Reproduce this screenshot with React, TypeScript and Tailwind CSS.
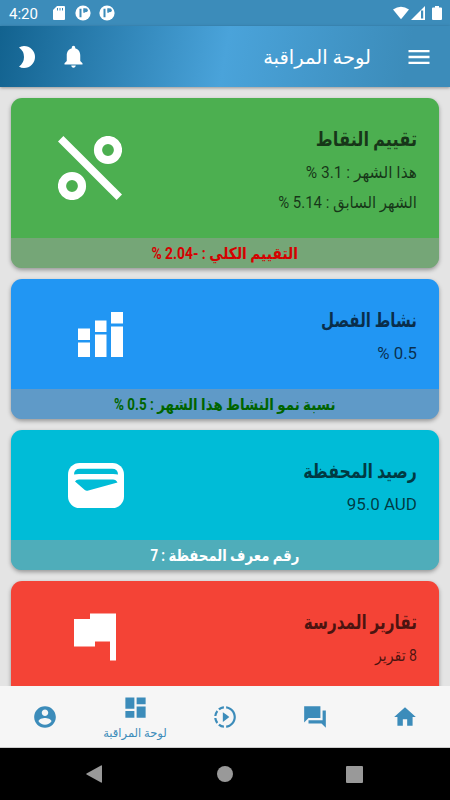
import type { ReactNode } from 'react'
import { MdSlowMotionVideo } from 'react-icons/md'

function Icon({ d, className }: { d: string; className?: string }) {
  return (
    <svg viewBox="0 0 24 24" fill="currentColor" className={className}>
      <path d={d} />
    </svg>
  )
}

const paths = {
  bell: 'M12 22c1.1 0 2-.9 2-2h-4c0 1.1.89 2 2 2zm6-6v-5c0-3.07-1.64-5.64-4.5-6.32V4c0-.83-.67-1.5-1.5-1.5s-1.5.67-1.5 1.5v.68C7.63 5.36 6 7.92 6 11v5l-2 2v1h16v-1l-2-2z',
  menu: 'M3 18h18v-2H3v2zm0-5h18v-2H3v2zm0-7v2h18V6H3z',
  account:
    'M12 2C6.48 2 2 6.48 2 12s4.48 10 10 10 10-4.48 10-10S17.52 2 12 2zm0 3c1.66 0 3 1.34 3 3s-1.34 3-3 3-3-1.34-3-3 1.34-3 3-3zm0 14.2c-2.5 0-4.71-1.28-6-3.22.03-1.99 4-3.08 6-3.08 1.99 0 5.97 1.09 6 3.08-1.29 1.94-3.5 3.22-6 3.22z',
  dashboard: 'M3 13h8V3H3v10zm0 8h8v-6H3v6zm10 0h8V11h-8v10zm0-18v6h8V3h-8z',
  chat: 'M21 6h-2v9H6v3h12l4 4V6zm-4 7V2H2v15l4-4h11z',
  home: 'M10 20v-6h4v6h5v-8h3L12 3 2 12h3v8z',
}

function AppBadge() {
  return (
    <svg viewBox="0 0 16 16" className="size-4">
      <circle cx="8" cy="8" r="7.6" fill="#fff" />
      <path d="M4.5 3.7h2v8.6h-2z M8.3 3.2h1.6v4.5H8.3z" fill="#3c8cba" />
      <circle cx="10.8" cy="5.3" r="2" fill="#3c8cba" />
    </svg>
  )
}

function StatusBar() {
  return (
    <div dir="ltr" className="flex h-[26px] shrink-0 items-center bg-[#3c8cba] pr-2 pl-[9px] text-white">
      <span className="w-11 pt-0.5 font-[Roboto,sans-serif] text-[15px]">4:20</span>
      <svg viewBox="0 0 12 14" className="h-3.5 w-3">
        <path d="M4 0h7q1 0 1 1v12q0 1-1 1H1q-1 0-1-1V4z" fill="#fff" />
        <path d="M4.5 2v2.5M7 2v2.5M9.5 2v2.5" stroke="#3c8cba" />
      </svg>
      <div className="ml-2.5 flex gap-2">
        <AppBadge />
        <AppBadge />
      </div>
      <div className="ml-auto flex items-center">
        <svg viewBox="0 0 18 14" className="mr-0.5 h-3.5 w-4">
          <path d="M0 3Q9-3 18 3L9 14z" fill="#fff" />
        </svg>
        <svg viewBox="0 0 14 14" className="h-3.5 w-3.5">
          <path d="M14 0v14H0z" fill="#fff" />
          <path d="M10 4.5h2.2v8H10z" fill="#3c8cba" />
        </svg>
        <svg viewBox="0 0 10 14" className="ml-[7px] h-3.5 w-2.5">
          <path d="M3 0h4v1.5h2q1 0 1 1V13q0 1-1 1H1q-1 0-1-1V2.5q0-1 1-1h2z" fill="#fff" />
        </svg>
      </div>
    </div>
  )
}

function Card({
  color,
  title,
  titleClass,
  lines,
  footer,
  className,
  icon,
}: {
  color: string
  title: string
  titleClass: string
  lines: ReactNode
  footer?: ReactNode
  className: string
  icon: ReactNode
}) {
  return (
    <section
      className={`${className} ${color} flex shrink-0 flex-col overflow-hidden rounded-[11px] shadow-[0_2px_4px_rgba(0,0,0,0.35)]`}
    >
      <div className="flex flex-1 justify-between pr-[22px]">
        <div className="w-[180px] pt-[25px] text-black/70">
          <h2 className={`${titleClass} flex h-8 origin-right items-center text-[20px] font-bold whitespace-nowrap`}>
            {title}
          </h2>
          {lines}
        </div>
        {icon}
      </div>
      {footer}
    </section>
  )
}

function Footer({ children, className }: { children: ReactNode; className: string }) {
  return (
    <div className="flex h-[30px] items-center justify-center bg-[#9e9e9e]/50 pt-0.5">
      <p className={`${className} text-[16px] font-bold whitespace-nowrap`}>{children}</p>
    </div>
  )
}

function Line({ children, className }: { children: ReactNode; className?: string }) {
  return (
    <p className={`${className ?? ''} flex h-[30px] origin-right items-center text-[16px] whitespace-nowrap`}>
      {children}
    </p>
  )
}

export default function App() {
  return (
    <div
      dir="rtl"
      className="flex h-[800px] w-[450px] flex-col overflow-hidden bg-[#e4e4e4] font-[Roboto,'DejaVu_Sans',sans-serif]"
    >
      <StatusBar />
      <header className="z-10 flex h-[61px] shrink-0 items-center bg-linear-[100deg,#12628f_0%,#4aa3da_50%,#3c8cba_90%] pr-[17px] pl-[19px] text-white shadow-[0_1px_3px_rgba(0,0,0,0.35)]">
        <Icon d={paths.menu} className="size-[28px]" />
        <h1 className="mr-[34px] pt-0.5 text-[19.5px] whitespace-nowrap">لوحة المراقبة</h1>
        <Icon d={paths.bell} className="mr-auto size-[27px]" />
        <svg viewBox="0 0 16 22" className="mr-[25px] h-[22px] w-4" fill="currentColor">
          <path d="M0 1.5Q2 0 5 0a11 11 0 0 1 0 22Q2 22 0 20.5Q5 17 5 11Q5 5 0 1.5z" />
        </svg>
      </header>

      <main className="flex flex-1 flex-col gap-[11px] overflow-hidden px-[11px] pt-[11px]">
        <Card
          color="bg-[#4caf50]"
          className="h-[170px]"
          title="تقييم النقاط"
          titleClass="scale-x-[0.815]"
          lines={
            <>
              <Line className="mt-[3px] scale-x-[0.97]">هذا الشهر : 3.1 %</Line>
              <Line className="scale-x-[0.933]">الشهر السابق : 5.14 %</Line>
            </>
          }
          footer={<Footer className="scale-x-[0.865] text-[#d50000]">التقييم الكلي : -2.04 %</Footer>}
          icon={
            <svg viewBox="0 0 64 64" className="mt-[38px] ml-[47px] size-16" fill="none" stroke="#fff">
              <path d="M2.7 2.7l58.6 58.6" strokeWidth="7.6" />
              <circle cx="50" cy="14" r="10" strokeWidth="8.2" />
              <circle cx="14" cy="50" r="10" strokeWidth="8.2" />
            </svg>
          }
        />
        <Card
          color="bg-[#2196f3]"
          className="h-[140px]"
          title="نشاط الفصل"
          titleClass="scale-x-[0.753]"
          lines={<Line className="mt-[3px] scale-x-[1.05]">0.5 %</Line>}
          footer={<Footer className="scale-x-[0.84] text-[#006400]">نسبة نمو النشاط هذا الشهر : 0.5 %</Footer>}
          icon={
            <svg viewBox="0 0 45 45" className="mt-[33px] ml-[67px] size-[45px]" fill="#fff">
              <path d="M0 16.5h12v11.5H0zM0 30.5h12V45H0zM17 8.5h11.5V20H17zM17 22.5h11.5V45H17zM33 0h12v11.5H33zM33 14.5h12V45H33z" />
            </svg>
          }
        />
        <Card
          color="bg-[#00bcd7]"
          className="h-[140px]"
          title="رصيد المحفظة"
          titleClass="scale-x-[0.792]"
          lines={
            <Line className="mt-[3px] scale-x-[1.06]">
              <span dir="ltr">95.0 AUD</span>
            </Line>
          }
          footer={<Footer className="scale-x-[0.828] text-white">رقم معرف المحفظة : 7</Footer>}
          icon={
            <svg viewBox="0 0 56 45" className="mt-[33px] ml-[57px] h-[45px] w-14">
              <rect width="56" height="45" rx="11.5" fill="#fff" />
              <path
                d="M6 11.5Q6 5.7 12 5.7H44Q50 5.7 50 11.5Q48 11 45 11H11Q8 11 6 11.5zM7 18.5Q8 16.5 11 16.5H45Q48 16.5 49.5 19.5L19.5 27.7Q18 28 16.8 27z"
                fill="#00bcd7"
              />
            </svg>
          }
        />
        <Card
          color="bg-[#f44336]"
          className="h-[140px]"
          title="تقارير المدرسة"
          titleClass="scale-x-[0.763]"
          lines={<Line className="mt-[3px] scale-x-[0.88]">8 تقرير</Line>}
          icon={
            <svg viewBox="0 0 43 48" className="mt-[32px] ml-[63px] h-12 w-[43px]">
              <path d="M16 0.5h26v47H36V28.5H21V33.5H0V6h16z" fill="#fff" />
            </svg>
          }
        />
      </main>

      <nav className="z-10 grid h-[62px] shrink-0 grid-cols-5 place-items-center border-b border-[#ccc] bg-[#f6f6f6] text-[#3c8cba]">
        <Icon d={paths.home} className="size-[26px]" />
        <Icon d={paths.chat} className="size-[26px]" />
        <MdSlowMotionVideo className="size-[26px]" />
        <div className="flex flex-col items-center pt-1">
          <Icon d={paths.dashboard} className="size-[27px]" />
          <span className="mt-0.5 text-[11.5px] leading-5 whitespace-nowrap">لوحة المراقبة</span>
        </div>
        <Icon d={paths.account} className="size-[26px]" />
      </nav>

      <div dir="ltr" className="flex h-[52px] shrink-0 items-center bg-black pl-[86px] text-[#999]">
        <svg viewBox="0 0 16 18" className="h-[18px] w-4" fill="currentColor">
          <path d="M16 1v16Q16 18 15 17.5L.5 9.5Q0 9 .5 8.5L15 .5Q16 0 16 1z" />
        </svg>
        <div className="ml-[115px] size-4 rounded-full bg-current" />
        <div className="ml-[113px] size-[17px] rounded-[1px] bg-current" />
      </div>
    </div>
  )
}
